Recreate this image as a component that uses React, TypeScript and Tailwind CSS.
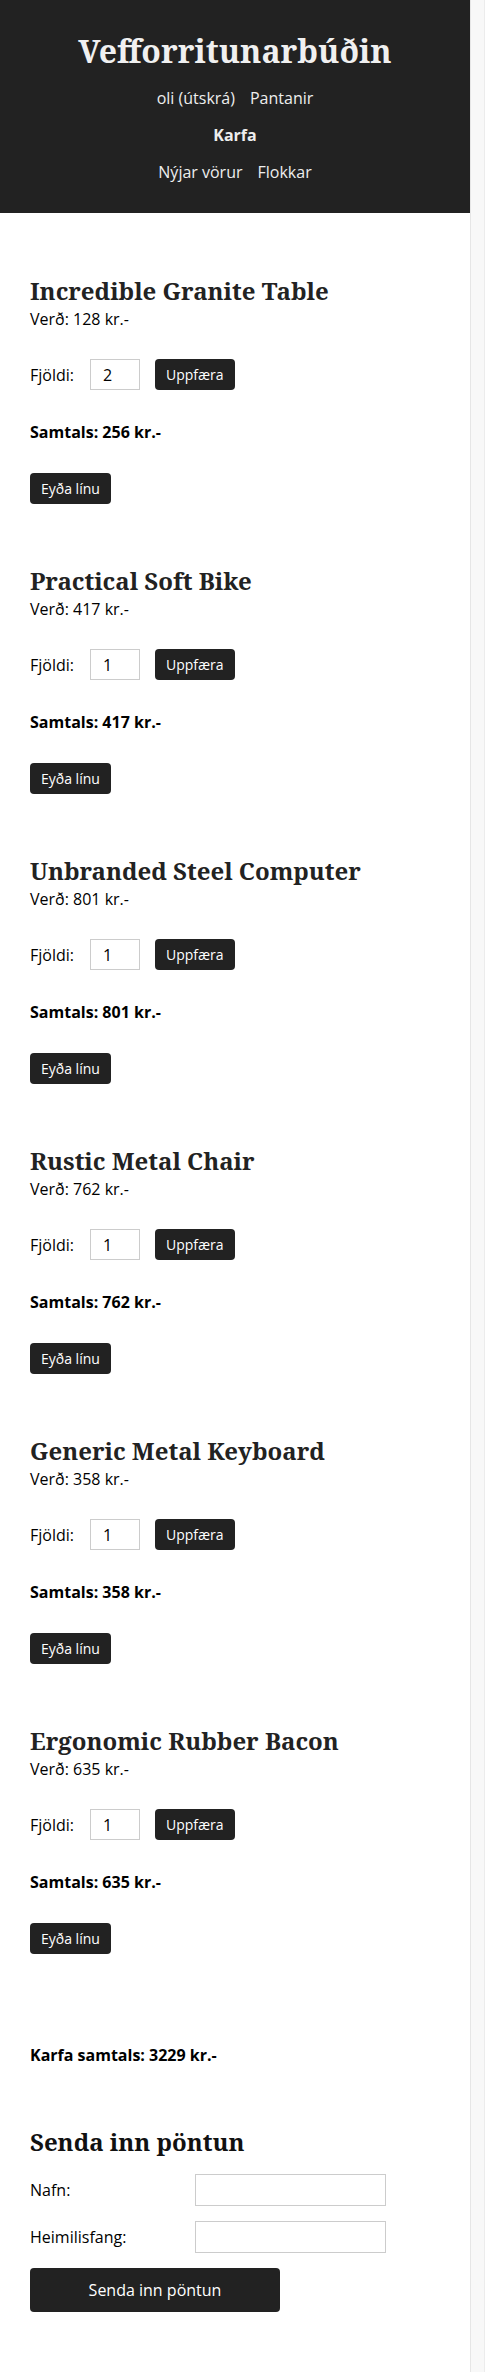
import React from "react";

const items = [
  { name: "Incredible Granite Table", price: 128, qty: 2 },
  { name: "Practical Soft Bike", price: 417, qty: 1 },
  { name: "Unbranded Steel Computer", price: 801, qty: 1 },
  { name: "Rustic Metal Chair", price: 762, qty: 1 },
  { name: "Generic Metal Keyboard", price: 358, qty: 1 },
  { name: "Ergonomic Rubber Bacon", price: 635, qty: 1 },
];

const serif = "font-['Noto_Serif','DejaVu_Serif',serif]";

export default function App() {
  const total = items.reduce((s, i) => s + i.price * i.qty, 0);
  return (
    <div className="flex w-[485px] min-h-[2372px] bg-white font-['Open_Sans','Noto_Sans',sans-serif] text-[16px] text-black">
      <div className="w-[470px] shrink-0">
        <header className="bg-[#222] h-[213px] pt-[30px] text-center">
          <h1 className={`${serif} text-[32px] leading-[42px] font-bold text-[#f0f0f0]`}>
            Vefforritunarbúðin
          </h1>
          <nav className="mt-[14px] flex flex-col gap-[13px] text-[#eee] leading-6">
            <div className="flex justify-center gap-[15px]">
              <span>oli (útskrá)</span>
              <span>Pantanir</span>
            </div>
            <div className="flex justify-center font-bold">
              <span>Karfa</span>
            </div>
            <div className="flex justify-center gap-[15px]">
              <span>Nýjar vörur</span>
              <span>Flokkar</span>
            </div>
          </nav>
        </header>
        <main className="px-[30px] pt-[62px]">
          <div className="flex flex-col gap-[61px]">
            {items.map((it) => (
              <div key={it.name} className="flex flex-col items-start">
                <h2 className={`${serif} text-[24px] leading-[32px] font-bold text-[#222]`}>{it.name}</h2>
                <p className="leading-6">Verð: {it.price} kr.-</p>
                <div className="mt-[28px] flex items-center h-[31px]">
                  <span className="leading-6">Fjöldi:</span>
                  <input
                    defaultValue={String(it.qty)}
                    className="ml-4 w-[50px] h-[31px] border border-[#ccc] pl-3 text-[16px] outline-none"
                  />
                  <button className="ml-[15px] h-[31px] px-[11px] rounded-[4px] bg-[#222] text-white text-[14px]">
                    Uppfæra
                  </button>
                </div>
                <p className="mt-[30px] leading-6 font-bold">Samtals: {it.price * it.qty} kr.-</p>
                <button className="mt-[29px] h-[31px] px-[11px] rounded-[4px] bg-[#222] text-white text-[14px]">
                  Eyða línu
                </button>
              </div>
            ))}
          </div>
          <p className="mt-[89px] leading-6 font-bold">Karfa samtals: {total} kr.-</p>
          <h2 className={`${serif} mt-[59px] text-[24px] leading-[32px] font-bold text-[#111]`}>Senda inn pöntun</h2>
          <div className="mt-4 grid grid-cols-[165px_191px] gap-y-[15px] items-center">
            <label className="leading-6">Nafn:</label>
            <input className="h-[32px] border border-[#ccc] px-2 outline-none" />
            <label className="leading-6">Heimilisfang:</label>
            <input className="h-[32px] border border-[#ccc] px-2 outline-none" />
          </div>
          <button className="mt-[15px] w-[250px] h-[44px] rounded-[4px] bg-[#222] text-white text-[16px]">
            Senda inn pöntun
          </button>
        </main>
      </div>
      <div className="w-[15px] shrink-0 border-l border-r border-l-[#e6e6e6] border-r-[#ececec] bg-[#f8f8f8]" />
    </div>
  );
}
